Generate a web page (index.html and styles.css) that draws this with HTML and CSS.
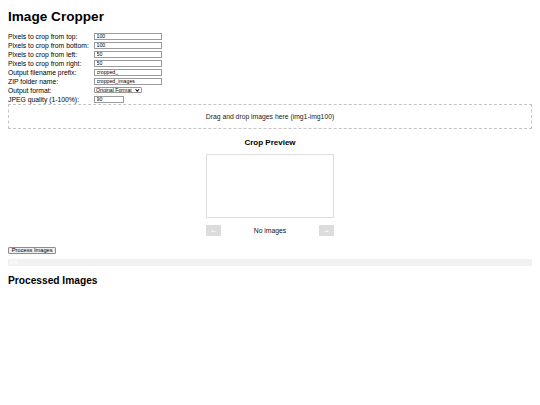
FILE: index.html
```html
<!DOCTYPE html>
<html lang="en">
<head>
<meta charset="utf-8">
<title>Image Cropper</title>
<link rel="stylesheet" href="styles.css">
</head>
<body>
<h1 class="title">Image Cropper</h1>
<div class="settings">
  <div class="row"><label class="lbl">Pixels to crop from top:</label><input class="field" type="text" value="100"></div>
  <div class="row"><label class="lbl">Pixels to crop from bottom:</label><input class="field" type="text" value="100"></div>
  <div class="row"><label class="lbl">Pixels to crop from left:</label><input class="field" type="text" value="50"></div>
  <div class="row"><label class="lbl">Pixels to crop from right:</label><input class="field" type="text" value="50"></div>
  <div class="row"><label class="lbl">Output filename prefix:</label><input class="field" type="text" value="cropped_"></div>
  <div class="row"><label class="lbl">ZIP folder name:</label><input class="field" type="text" value="cropped_images"></div>
  <div class="row"><label class="lbl">Output format:</label><span class="select-wrap"><select class="format"><option>Original Format</option><option>JPEG</option><option>PNG</option></select></span></div>
  <div class="row"><label class="lbl">JPEG quality (1-100%):</label><input class="field field-short" type="text" value="90"></div>
</div>
<div class="drop">Drag and drop images here (img1-img100)</div>
<div class="preview">
  <h3 class="preview-title">Crop Preview</h3>
  <div class="preview-box"></div>
  <div class="nav">
    <button class="nav-btn" disabled>&#8592;</button>
    <span class="nav-info">No images</span>
    <button class="nav-btn" disabled>&#8594;</button>
  </div>
</div>
<button class="process">Process Images</button>
<div class="progress"><div class="progress-fill" style="width:0%">0%</div></div>
<h2 class="results-title">Processed Images</h2>
</body>
</html>
```

FILE: styles.css
```css
html, body {
  background: #fff;
}
body {
  margin: 0;
  padding: 9.1px 8px 8px;
  font-family: "Liberation Sans", Arial, sans-serif;
  font-size: 6.8px;
  color: #000;
}
.title {
  font-size: 13.6px;
  font-weight: bold;
  margin: 0 0 8px;
  line-height: 15.6px;
}
.settings {
  display: flex;
  flex-direction: column;
}
.row {
  display: flex;
  align-items: center;
  height: 7px;
  margin-bottom: 2px;
}
.lbl {
  width: 85px;
  flex: none;
  line-height: 7px;
  white-space: nowrap;
}
.field {
  box-sizing: border-box;
  width: 68px;
  height: 7px;
  border: 1px solid #9a9a9a;
  padding: 0 2px;
  font-family: "Liberation Sans", Arial, sans-serif;
  font-size: 5.2px;
  color: #000;
  background: #fff;
  margin: 0 0 0 0.5px;
  outline: none;
}
.field-short {
  width: 30px;
}
.select-wrap {
  position: relative;
  display: inline-block;
  margin-left: 0.5px;
  height: 6.5px;
}
.select-wrap::after {
  content: "";
  position: absolute;
  right: 2.5px;
  top: 1.2px;
  width: 1.6px;
  height: 1.6px;
  border-right: 0.8px solid #000;
  border-bottom: 0.8px solid #000;
  transform: rotate(45deg);
  pointer-events: none;
}
.format {
  -webkit-appearance: none;
  appearance: none;
  box-sizing: border-box;
  display: block;
  height: 6.5px;
  width: 48px;
  margin: 0;
  padding: 0 0 0 1.5px;
  font-family: "Liberation Sans", Arial, sans-serif;
  font-size: 5.2px;
  line-height: 4.5px;
  border: 1px solid #9a9a9a;
  border-radius: 1px;
  background: #fff;
  color: #000;
}
.drop {
  border: 1px dashed #c4c4c4;
  padding: 7.6px 0;
  line-height: 7.8px;
  text-align: center;
  color: #222;
  margin-top: -0.5px;
}
.preview {
  display: flex;
  flex-direction: column;
  align-items: center;
}
.preview-title {
  font-size: 8px;
  font-weight: bold;
  margin: 9px 0 7px;
  line-height: 9.2px;
}
.preview-box {
  box-sizing: border-box;
  width: 127.5px;
  height: 64px;
  border: 1px solid #dddddd;
}
.nav {
  width: 127.5px;
  margin-top: 6.4px;
  display: flex;
  justify-content: space-between;
  align-items: center;
}
.nav-btn {
  box-sizing: border-box;
  width: 15px;
  height: 11.6px;
  padding: 0;
  border: none;
  background: #dcdcdc;
  color: #ffffff;
  font-family: "DejaVu Sans", "Liberation Sans", sans-serif;
  font-size: 6px;
  line-height: 11.6px;
}
.nav-info {
  font-size: 6.8px;
  color: #111;
}
.process {
  display: block;
  box-sizing: border-box;
  margin-top: 10.4px;
  height: 7px;
  padding: 0 2.8px;
  border: 1px solid #8d8d8d;
  border-radius: 1px;
  background: #efefef;
  font-family: "Liberation Sans", Arial, sans-serif;
  font-size: 5.7px;
  line-height: 5px;
  color: #000;
}
.progress {
  margin-top: 5.6px;
  height: 6.7px;
  background: #f1f1f1;
}
.progress-fill {
  height: 100%;
  background: #4caf50;
  color: #fff;
  font-size: 5.7px;
  line-height: 6.7px;
  white-space: nowrap;
  text-indent: 1.5px;
}
.results-title {
  font-size: 10.2px;
  font-weight: bold;
  margin: 8.8px 0;
  line-height: 11.7px;
}
```
